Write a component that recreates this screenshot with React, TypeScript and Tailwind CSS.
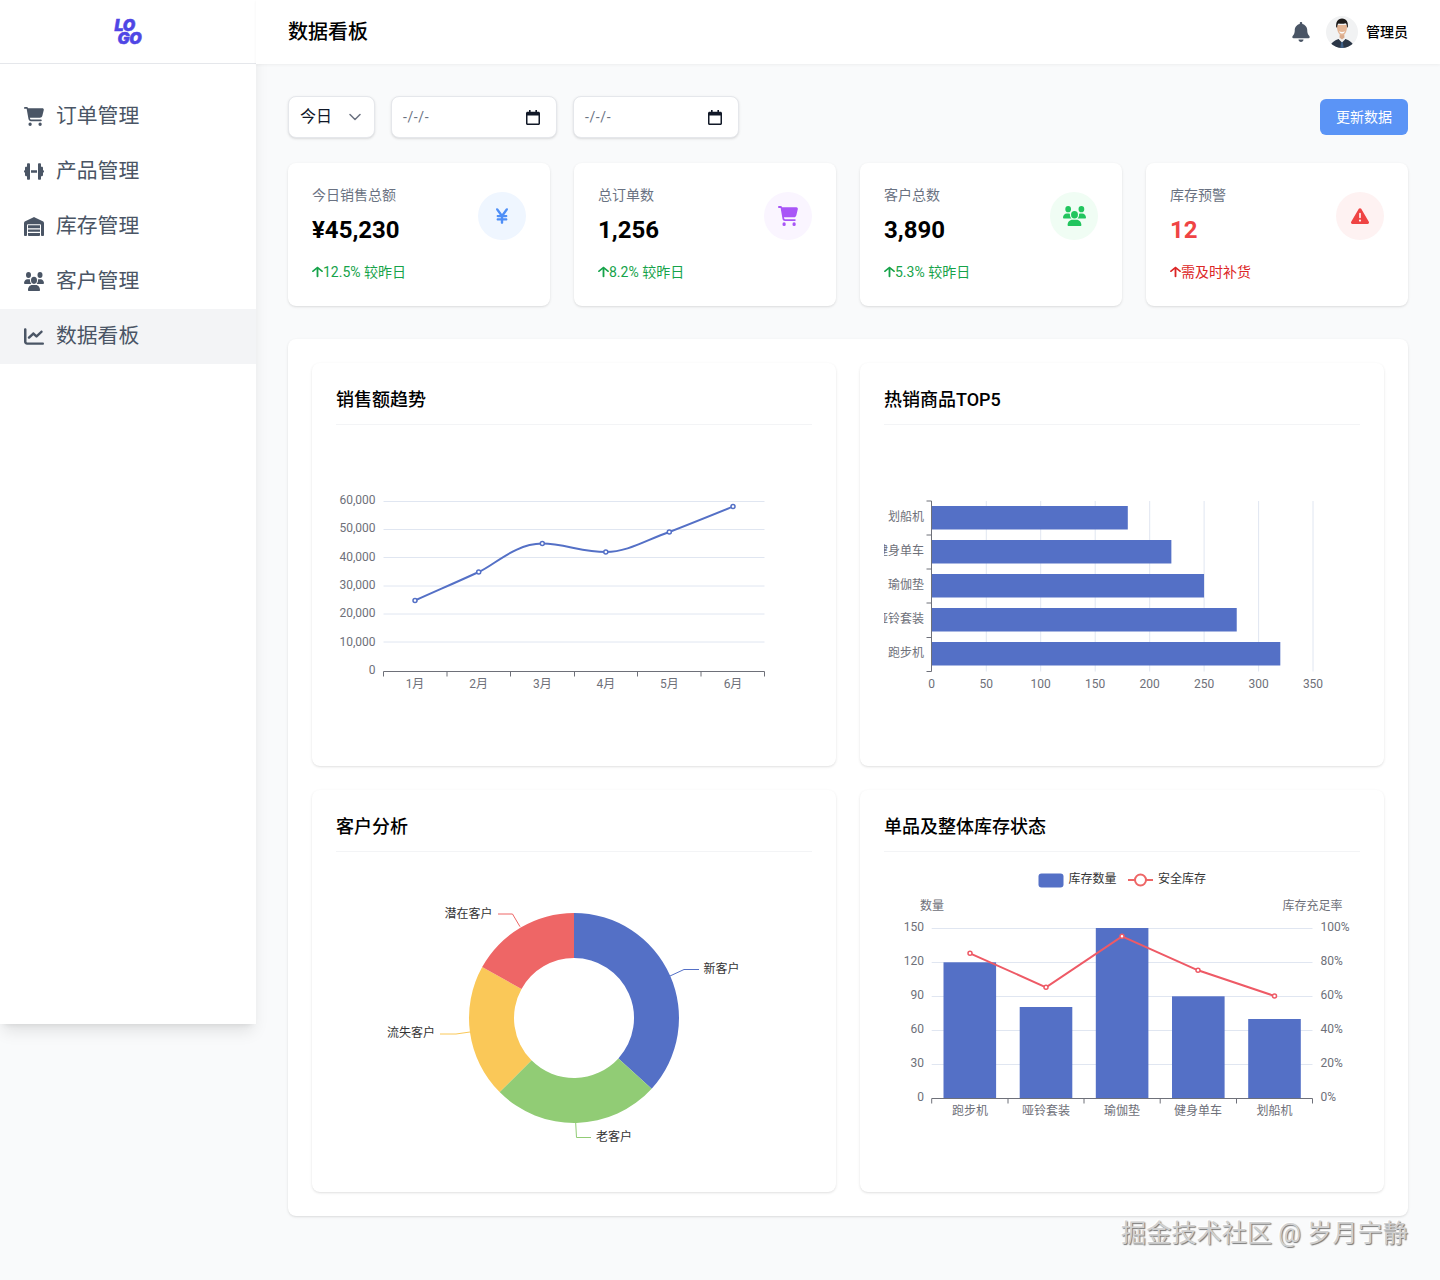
import React from "react";
import { FaCartShopping, FaDumbbell, FaWarehouse, FaUsers, FaChartLine, FaBell, FaYenSign, FaTriangleExclamation, FaArrowUp } from "react-icons/fa6";

const FONT = "[font-family:Roboto,'Noto_Sans_CJK_SC',sans-serif]";
const F = "Roboto, 'Noto Sans CJK SC', sans-serif";

const nav = [
  { icon: FaCartShopping, label: "订单管理" },
  { icon: FaDumbbell, label: "产品管理" },
  { icon: FaWarehouse, label: "库存管理" },
  { icon: FaUsers, label: "客户管理" },
  { icon: FaChartLine, label: "数据看板", active: true },
];

const stats = [
  { label: "今日销售总额", value: "¥45,230", delta: "12.5% 较昨日", icon: FaYenSign, size: "h-[18px] w-[12px]", circle: "bg-[#eff6ff]", iconColor: "text-[#4f8ff7]" },
  { label: "总订单数", value: "1,256", delta: "8.2% 较昨日", icon: FaCartShopping, size: "h-5 w-5", circle: "bg-[#faf5ff]", iconColor: "text-[#a855f7]" },
  { label: "客户总数", value: "3,890", delta: "5.3% 较昨日", icon: FaUsers, size: "h-5 w-[23px]", circle: "bg-[#f0fdf4]", iconColor: "text-[#22c55e]" },
  { label: "库存预警", value: "12", delta: "需及时补货", icon: FaTriangleExclamation, size: "h-[18px] w-[18px]", circle: "bg-[#fef2f2]", iconColor: "text-[#ef4444]", danger: true },
];

function Logo() {
  return (
    <div className="flex flex-col font-black italic text-[#4f46e5] text-[16px] leading-[12.5px] [font-family:Inter,sans-serif] tracking-[-0.3px] [-webkit-text-stroke:0.5px_#4f46e5]">
      <span>LO</span>
      <span className="ml-[3px]">GO</span>
    </div>
  );
}

function Avatar() {
  return (
    <svg width="32" height="32" viewBox="0 0 32 32" className="rounded-full">
      <rect width="32" height="32" fill="#f1f2f3" />
      <path d="M4 32c.5-5 4-7.500 9-9l3 2 3-2c5 1.500 8.500 4 9 9z" fill="#2b3646" />
      <path d="M13 23.500l3 3 3-3-1-5h-4z" fill="#f0f0f0" />
      <path d="M13.800 18.500h4.400l.3 3-2.500 2-2.500-2z" fill="#d9ab8d" />
      <path d="M15.200 26h1.600l.9 6h-3.400z" fill="#3f5f86" />
      <path d="M10.800 9c0 6 2.200 10.500 5.200 10.500S21.200 15 21.200 9z" fill="#e3b595" />
      <path d="M10.200 11.500c-.6-5.500 1.500-9 5.800-9 4.500 0 6.500 3.500 5.800 9l-.8-.3c0-2-.5-3.500-1.500-4-2 .8-5 .8-7 .2-1 .8-1.300 2.200-1.300 3.800z" fill="#1c1a1a" />
      <path d="M13 15.200c1.500 1.100 4.500 1.100 6 0-.6 1.800-1.700 2.300-3 2.300s-2.400-.5-3-2.300z" fill="#fafafa" />
    </svg>
  );
}

function Calendar() {
  return (
    <svg width="14" height="15" viewBox="0 0 14 15" fill="#111827">
      <path d="M3 0h1.600v1.800h4.800V0H11v1.800h1.500c.8 0 1.500.7 1.500 1.500v10.200c0 .8-.7 1.500-1.500 1.500h-11C.7 15 0 14.300 0 13.500V3.300c0-.8.7-1.500 1.500-1.500H3zM1.500 5.500v8h11v-8z" />
    </svg>
  );
}

function DateBox() {
  return (
    <div className="flex h-[42px] w-[166px] items-center justify-between rounded-lg border border-gray-200 bg-white pr-[16px] pl-[11px] text-sm tracking-[0.6px] text-gray-500 shadow-sm">
      <span>-/-/-</span>
      <Calendar />
    </div>
  );
}

function StatCard({ s }: { s: (typeof stats)[number] }) {
  const I = s.icon;
  return (
    <div className="flex h-[143px] flex-1 items-start justify-between rounded-lg bg-white p-6 shadow-sm">
      <div className="flex flex-col">
        <span className="-mt-[2px] text-sm leading-5 text-gray-500">{s.label}</span>
        <span className={`mt-[9px] text-2xl leading-8 font-bold ${s.danger ? "text-[#ef4444]" : "text-black"}`}>{s.value}</span>
        <span className={`mt-[16px] flex items-center text-sm leading-5 ${s.danger ? "text-[#dc2626]" : "text-[#16a34a]"}`}>
          <FaArrowUp className="h-3 w-[11px]" preserveAspectRatio="none" />
          {s.delta}
        </span>
      </div>
      <div className={`mt-[5px] flex h-12 w-12 items-center justify-center rounded-full ${s.circle} ${s.iconColor}`}>
        <I className={s.size} preserveAspectRatio="none" />
      </div>
    </div>
  );
}

function ChartCard({ title, h, children }: { title: string; h: string; children: React.ReactNode }) {
  return (
    <div className={`${h} rounded-lg bg-white p-6 shadow-sm`}>
      <h3 className="border-b border-gray-100 pb-[9px] text-lg leading-7 font-medium text-black">
        <span className="relative -top-px">{title}</span>
      </h3>
      {children}
    </div>
  );
}

const axisGray = "#6e7079";
const gridLine = "#e0e6f1";

function Txt({ x, y, a = "middle", c = axisGray, children }: { x: number; y: number; a?: "start" | "middle" | "end"; c?: string; children: React.ReactNode }) {
  return (
    <text x={x} y={y} textAnchor={a} dominantBaseline="central" fontSize="12" fill={c} fontFamily={F}>
      {children}
    </text>
  );
}

function LineChart() {
  const ys = [501.5, 529.5, 557.5, 586, 614, 642];
  const ly = [499.5, 527.5, 556.5, 584.5, 612.5, 641.5];
  const labels = ["60,000", "50,000", "40,000", "30,000", "20,000", "10,000"];
  const ticks = [383.5, 447, 510.5, 574.5, 637.5, 701, 764.5];
  const pts = [
    [415, 600.5],
    [478.7, 572],
    [542.3, 543.6],
    [605.8, 552],
    [669.3, 532],
    [733, 506.6],
  ];
  return (
    <svg width="476" height="316" viewBox="336 425 476 316" className="block">
      {ys.map((y, i) => (
        <g key={y}>
          <line x1="383.500" x2="764.500" y1={y} y2={y} stroke={gridLine} />
          <Txt x={375.5} y={ly[i]} a="end">{labels[i]}</Txt>
        </g>
      ))}
      <Txt x={375.5} y={670} a="end">0</Txt>
      <line x1="383.500" x2="764.500" y1="671.500" y2="671.500" stroke={axisGray} />
      {ticks.map((x) => (
        <line key={x} x1={x} x2={x} y1="671.500" y2="676.500" stroke={axisGray} />
      ))}
      {["1月", "2月", "3月", "4月", "5月", "6月"].map((m, i) => (
        <Txt key={m} x={pts[i][0]} y={684}>{m}</Txt>
      ))}
      <path
        d="M415 600.500C436 591 457 582 478.700 572C495 564.700 515 543.600 542.300 543.600C563 543.600 583 552 605.800 552C628 552 646 540 669.300 532C690 524 711 515.500 733 506.600"
        fill="none"
        stroke="#5470c6"
        strokeWidth="2"
      />
      {pts.map(([x, y]) => (
        <circle key={x} cx={x} cy={y} r="2" fill="#fff" stroke="#5470c6" strokeWidth="1.500" />
      ))}
    </svg>
  );
}

function BarChart() {
  const xs = [986.3, 1040.7, 1095.2, 1149.7, 1204.1, 1258.6, 1313];
  const bars = [
    { n: "划船机", v: 180, y: 506 },
    { n: "健身单车", v: 220, y: 540 },
    { n: "瑜伽垫", v: 250, y: 574 },
    { n: "哑铃套装", v: 280, y: 608 },
    { n: "跑步机", v: 320, y: 642 },
  ];
  const ticks = [501, 535, 569, 603, 637.5, 671.5];
  return (
    <svg width="476" height="316" viewBox="884 425 476 316" className="block">
      {xs.map((x) => (
        <line key={x} x1={x} x2={x} y1="501" y2="671.500" stroke={gridLine} />
      ))}
      {bars.map((b) => (
        <g key={b.n}>
          <rect x="931.700" y={b.y} width={b.v * 1.0894} height="23.500" fill="#5470c6" />
          <Txt x={924} y={b.y + 11} a="end">{b.n}</Txt>
        </g>
      ))}
      <line x1="931.500" x2="931.500" y1="501" y2="671.500" stroke={axisGray} />
      {ticks.map((y) => (
        <line key={y} x1="926.500" x2="931.500" y1={y} y2={y} stroke={axisGray} />
      ))}
      {[0, 50, 100, 150, 200, 250, 300, 350].map((v, i) => (
        <Txt key={v} x={i === 0 ? 931.7 : xs[i - 1]} y={683.5}>{v}</Txt>
      ))}
    </svg>
  );
}

function arc(a0: number, a1: number) {
  const cx = 574, cy = 1018, R = 105, r = 60;
  const p = (rad: number, a: number) => {
    const t = (a * Math.PI) / 180;
    return `${cx + rad * Math.sin(t)} ${cy - rad * Math.cos(t)}`;
  };
  const large = a1 - a0 > 180 ? 1 : 0;
  return `M${p(R, a0)}A${R} ${R} 0 ${large} 1 ${p(R, a1)}L${p(r, a1)}A${r} ${r} 0 ${large} 0 ${p(r, a0)}Z`;
}

function Donut() {
  return (
    <svg width="476" height="316" viewBox="336 852 476 316" className="block">
      <path d={arc(0, 132.3)} fill="#5470c6" />
      <path d={arc(132.3, 225.1)} fill="#91cc75" />
      <path d={arc(225.1, 299)} fill="#fac858" />
      <path d={arc(299, 360)} fill="#ee6666" />
      <path d="M670 976L684 969.500H699" fill="none" stroke="#5470c6" />
      <path d="M575.700 1123L576.500 1137.500H591" fill="none" stroke="#91cc75" />
      <path d="M470 1032L456 1034H440" fill="none" stroke="#fac858" />
      <path d="M520 926.700L512.500 914H498" fill="none" stroke="#ee6666" />
      <Txt x={703.5} y={968.5} a="start" c="#333">新客户</Txt>
      <Txt x={596} y={1136.5} a="start" c="#333">老客户</Txt>
      <Txt x={435} y={1032.5} a="end" c="#333">流失客户</Txt>
      <Txt x={492.500} y={914} a="end" c="#333">潜在客户</Txt>
    </svg>
  );
}

function ComboChart() {
  const ys = [928.5, 962.5, 996.5, 1030.5, 1064.5];
  const left = ["150", "120", "90", "60", "30"];
  const right = ["100%", "80%", "60%", "40%", "20%"];
  const bars = [
    { x: 943.5, top: 962.3 },
    { x: 1019.7, top: 1007 },
    { x: 1095.8, top: 928 },
    { x: 1172, top: 996.3 },
    { x: 1248.2, top: 1019 },
  ];
  const line = [
    [970, 953.3],
    [1046, 987.3],
    [1122, 936.3],
    [1198, 970.3],
    [1274.5, 996],
  ];
  return (
    <svg width="476" height="316" viewBox="884 852 476 316" className="block">
      <rect x="1038.500" y="873.500" width="25" height="14" rx="3" fill="#5470c6" />
      <Txt x={1068.5} y={879} a="start" c="#333">库存数量</Txt>
      <line x1="1128" x2="1153" y1="880" y2="880" stroke="#ee6666" strokeWidth="2" />
      <circle cx="1140.500" cy="880" r="5.500" fill="#fff" stroke="#ee6666" strokeWidth="2" />
      <Txt x={1158} y={879} a="start" c="#333">安全库存</Txt>
      <Txt x={932} y={905.5}>数量</Txt>
      <Txt x={1312.5} y={905.5}>库存充足率</Txt>
      {ys.map((y, i) => (
        <g key={y}>
          <line x1="931.700" x2="1312.500" y1={y} y2={y} stroke={gridLine} />
          <Txt x={924} y={y - 2} a="end">{left[i]}</Txt>
          <Txt x={1320.5} y={y - 2} a="start">{right[i]}</Txt>
        </g>
      ))}
      <Txt x={924} y={1096.5} a="end">0</Txt>
      <Txt x={1320.5} y={1096.5} a="start">0%</Txt>
      {bars.map((b) => (
        <rect key={b.x} x={b.x} y={b.top} width="52.600" height={1098 - b.top} fill="#5470c6" />
      ))}
      <line x1="931.700" x2="1312.500" y1="1098.500" y2="1098.500" stroke={axisGray} />
      {[931.7, 1008, 1084, 1160.2, 1236.5, 1312.5].map((x) => (
        <line key={x} x1={x} x2={x} y1="1098.500" y2="1103.500" stroke={axisGray} />
      ))}
      {["跑步机", "哑铃套装", "瑜伽垫", "健身单车", "划船机"].map((n, i) => (
        <Txt key={n} x={line[i][0]} y={1110.5}>{n}</Txt>
      ))}
      <polyline points={line.map((p) => p.join(",")).join(" ")} fill="none" stroke="#ee5a66" strokeWidth="2" />
      {line.map(([x, y]) => (
        <circle key={x} cx={x} cy={y} r="2" fill="#fff" stroke="#ee5a66" strokeWidth="1.500" />
      ))}
    </svg>
  );
}

export default function App() {
  return (
    <div className={`relative flex min-h-[1280px] w-[1440px] bg-[#f9fafb] ${FONT}`}>
      <aside className="h-[1024px] w-64 shrink-0 bg-white shadow-lg">
        <div className="flex h-16 items-center justify-center border-b border-gray-200">
          <Logo />
        </div>
        <nav className="pt-[25px]">
          {nav.map((n) => {
            const I = n.icon;
            return (
              <div key={n.label} className={`flex h-[55px] items-center px-6 text-[20.8px] text-gray-600 ${n.active ? "bg-gray-100" : ""}`}>
                <I className="mr-3 h-[19px] w-5 shrink-0 text-gray-600" preserveAspectRatio="none" />
                <span>{n.label}</span>
              </div>
            );
          })}
        </nav>
      </aside>
      <div className="flex min-w-0 flex-1 flex-col">
        <header className="flex h-16 items-center justify-between bg-white px-8 shadow-[0_1px_3px_rgba(0,0,0,0.05)]">
          <h1 className="text-xl font-medium text-black">数据看板</h1>
          <div className="flex items-center">
            <FaBell className="-ml-px mr-px h-5 w-[18px] text-gray-600" />
            <span className="mr-[8px] ml-[15px] inline-flex"><Avatar /></span>
            <span className="text-sm font-medium text-black">管理员</span>
          </div>
        </header>
        <main className="flex flex-col px-8 pt-8">
          <div className="flex items-center">
            <div className="flex h-[42px] w-[87px] items-center justify-between rounded-lg border border-gray-200 bg-white pr-[13px] pl-[11px] text-base text-gray-900 shadow-sm">
              <span>今日</span>
              <svg width="12" height="8" viewBox="0 0 12 8" fill="none" stroke="#6b7280" strokeWidth="1.500" strokeLinecap="round" strokeLinejoin="round">
                <path d="M1 1.500l5 5 5-5" />
              </svg>
            </div>
            <div className="ml-4"><DateBox /></div>
            <div className="ml-4"><DateBox /></div>
            <button className="ml-auto h-9 w-[88px] rounded-md bg-[#5b94f6] text-sm text-white">更新数据</button>
          </div>
          <div className="mt-[25px] flex gap-6">
            {stats.map((s) => (
              <StatCard key={s.label} s={s} />
            ))}
          </div>
          <div className="mt-[33px] grid grid-cols-2 gap-6 rounded-lg bg-white p-6 shadow-sm">
            <ChartCard h="h-[403px]" title="销售额趋势"><LineChart /></ChartCard>
            <ChartCard h="h-[403px]" title="热销商品TOP5"><BarChart /></ChartCard>
            <ChartCard h="h-[402px]" title="客户分析"><Donut /></ChartCard>
            <ChartCard h="h-[402px]" title="单品及整体库存状态"><ComboChart /></ChartCard>
          </div>
        </main>
      </div>
      <div className="absolute top-[1218px] right-8 text-[25.2px] leading-8 whitespace-nowrap text-[#d0d0d0] [text-shadow:1px_1px_1px_#777,-1px_-1px_0_#fff]">
        掘金技术社区 @ 岁月宁静
      </div>
    </div>
  );
}
